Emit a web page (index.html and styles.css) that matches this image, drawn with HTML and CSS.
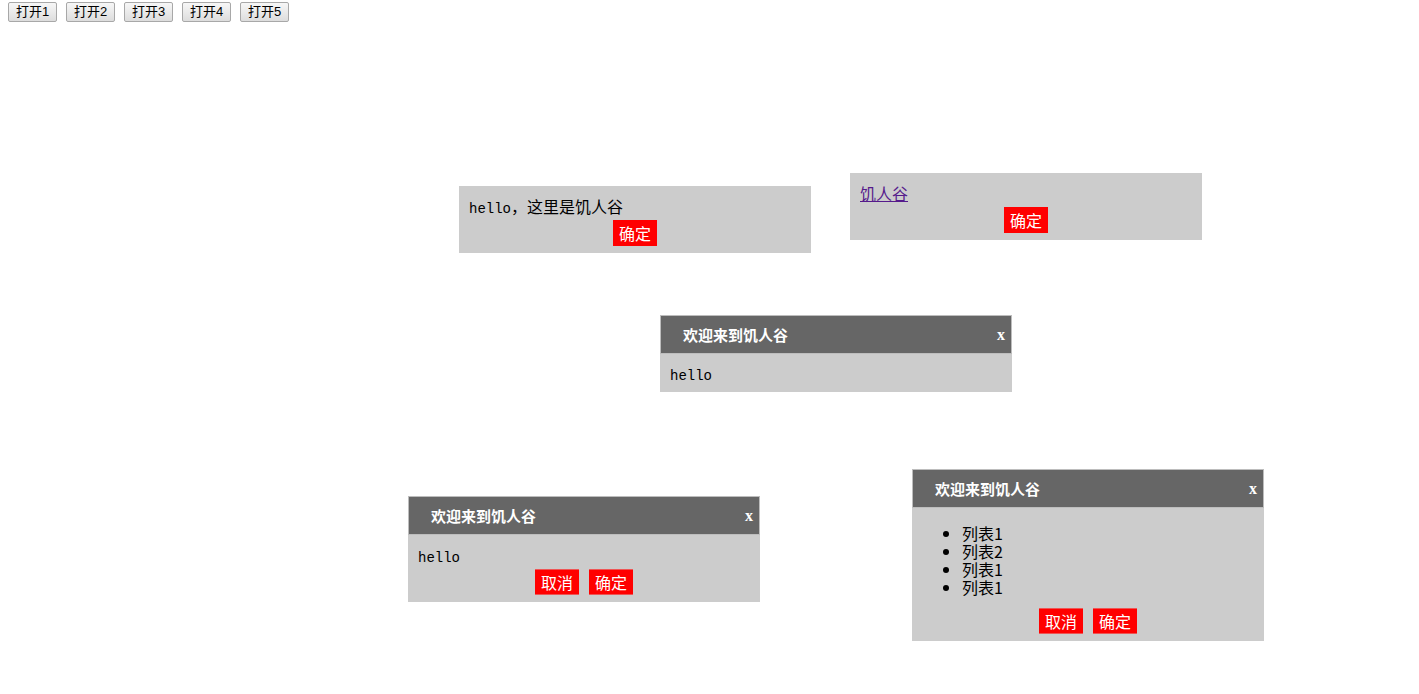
FILE: index.html
```html
<!DOCTYPE html>
<html lang="zh-CN">
<head>
<meta charset="utf-8">
<title>Dialog</title>
<link rel="stylesheet" href="styles.css">
</head>
<body>
<div class="toolbar">
  <button class="open-btn">打开1</button>
  <button class="open-btn">打开2</button>
  <button class="open-btn">打开3</button>
  <button class="open-btn">打开4</button>
  <button class="open-btn">打开5</button>
</div>

<div class="dialog d1">
  <div class="dialog-body">
    <div class="content"><span class="asc">hello</span>，这里是饥人谷</div>
    <div class="actions"><button class="act">确定</button></div>
  </div>
</div>

<div class="dialog d2">
  <div class="dialog-body">
    <div class="content"><a class="link" href="#">饥人谷</a></div>
    <div class="actions"><button class="act">确定</button></div>
  </div>
</div>

<div class="dialog d3">
  <div class="dialog-header"><span class="title">欢迎来到饥人谷</span><span class="close">x</span></div>
  <div class="dialog-body">
    <div class="content"><span class="asc">hello</span></div>
  </div>
</div>

<div class="dialog d4">
  <div class="dialog-header"><span class="title">欢迎来到饥人谷</span><span class="close">x</span></div>
  <div class="dialog-body">
    <div class="content"><span class="asc">hello</span></div>
    <div class="actions"><button class="act">取消</button><button class="act">确定</button></div>
  </div>
</div>

<div class="dialog d5">
  <div class="dialog-header"><span class="title">欢迎来到饥人谷</span><span class="close">x</span></div>
  <div class="dialog-body">
    <ul class="list">
      <li>列表1</li>
      <li>列表2</li>
      <li>列表1</li>
      <li>列表1</li>
    </ul>
    <div class="actions"><button class="act">取消</button><button class="act">确定</button></div>
  </div>
</div>
</body>
</html>
```

FILE: styles.css
```css
html, body {
  margin: 0;
  padding: 0;
  background: #fff;
}

body {
  font-family: "Noto Sans CJK SC", "Liberation Sans", sans-serif;
  font-size: 16px;
  color: #000;
  position: relative;
  width: 1419px;
  height: 694px;
}

.toolbar {
  display: flex;
  gap: 9px;
  padding: 2px 8px 0;
}

.open-btn {
  height: 20px;
  width: 49px;
  padding: 0;
  margin: 0;
  font-family: "Liberation Sans", "Noto Sans CJK SC", sans-serif;
  font-size: 13px;
  line-height: 18px;
  color: #000;
  background: linear-gradient(#f7f7f7, #dddddd);
  border: 1px solid #a8a8a8;
  border-radius: 2px;
}

.dialog {
  position: absolute;
  width: 352px;
  background: #ccc;
}

.d1 { left: 459px; top: 186px; }
.d2 { left: 850px; top: 173px; }
.d3 { left: 660px; top: 315px; }
.d4 { left: 408px; top: 496px; }
.d5 { left: 912px; top: 469px; }

.dialog-header {
  display: flex;
  align-items: center;
  justify-content: space-between;
  height: 37px;
  background: #666;
  border: 1px solid #bdbdbd;
  padding: 0 6px 0 22px;
  box-sizing: content-box;
  width: 322px;
  color: #fff;
}

.title {
  font-size: 15px;
  font-weight: bold;
  line-height: 20px;
}

.close {
  font-family: "Liberation Serif", serif;
  font-weight: bold;
  font-size: 16px;
  line-height: 20px;
}

.dialog-body {
  padding: 10px 10px 7px;
}

.d3 .dialog-body {
  padding: 9px 10px 9px;
}

.content {
  line-height: 20px;
  height: 20px;
}

.asc {
  font-family: "Liberation Mono", monospace;
  font-size: 14px;
}

.link {
  color: #551a8b;
  text-decoration: underline;
}

.actions {
  display: flex;
  justify-content: center;
  gap: 10px;
  margin-top: 4px;
}

.act {
  width: 44px;
  height: 26px;
  padding: 0;
  margin: 0;
  border: 0;
  background: #f00;
  color: #fff;
  font-family: "Noto Sans CJK SC", sans-serif;
  font-size: 16px;
  line-height: 24px;
}

.d4 .act,
.d5 .act {
  border-top: 1px solid #ee5555;
  border-bottom: 1px solid #ee5555;
}

.list {
  margin: 6px 0 12px;
  padding-left: 40px;
  line-height: 18px;
}

.list li {
  height: 18px;
}
```
